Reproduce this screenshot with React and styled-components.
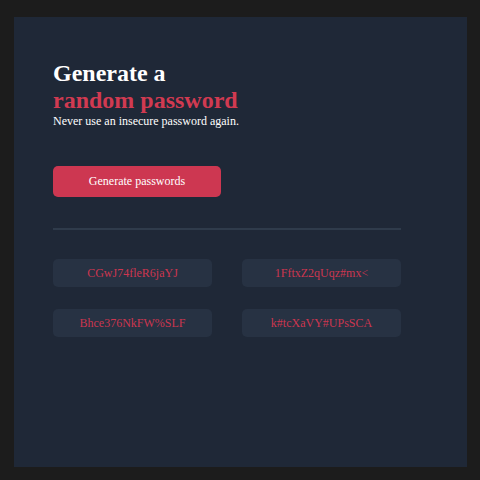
import React from "react";
import styled, { createGlobalStyle } from "styled-components";

const Global = createGlobalStyle`
  html, body { margin: 0; padding: 0; background: #1c1c1c; }
  body { font-family: "Liberation Serif", "Times New Roman", serif; }
  * { box-sizing: border-box; }
`;

const Page = styled.div`
  width: 480px;
  height: 480px;
  padding: 17px 13px 13px 14px;
`;

const Panel = styled.main`
  width: 453px;
  height: 450px;
  background: #1f2837;
  padding: 43px 39px 0 39px;
  display: flex;
  flex-direction: column;
`;

const Title = styled.h1`
  margin: 0;
  font-size: 24px;
  line-height: 27px;
  font-weight: 700;
  color: #ffffff;
`;

const Accent = styled.span`
  display: block;
  color: #d13a51;
`;

const Subtitle = styled.p`
  margin: 0;
  font-size: 12px;
  line-height: 15px;
  color: #ffffff;
`;

const Button = styled.button`
  margin-top: 37px;
  width: 168px;
  height: 31px;
  border: none;
  border-radius: 5px;
  background: #cd3751;
  color: #ffffff;
  font-family: inherit;
  font-size: 12px;
  cursor: pointer;
`;

const Divider = styled.hr`
  margin: 31px 0 0 0;
  width: 348px;
  border: none;
  height: 2px;
  background: #2f3b4b;
`;

const Grid = styled.div`
  margin-top: 29px;
  width: 348px;
  display: grid;
  grid-template-columns: 159px 159px;
  column-gap: 30px;
  row-gap: 22px;
`;

const PasswordBox = styled.div`
  height: 28px;
  border-radius: 5px;
  background: #273243;
  color: #cc3650;
  font-size: 12px;
  display: flex;
  align-items: center;
  justify-content: center;
`;

const passwords = ["CGwJ74fleR6jaYJ", "1FftxZ2qUqz#mx<", "Bhce376NkFW%SLF", "k#tcXaVY#UPsSCA"];

export default function App() {
  return (
    <>
      <Global />
      <Page>
        <Panel>
          <Title>
            Generate a
            <Accent>random password</Accent>
          </Title>
          <Subtitle>Never use an insecure password again.</Subtitle>
          <Button>Generate passwords</Button>
          <Divider />
          <Grid>
            {passwords.map((p) => (
              <PasswordBox key={p}>{p}</PasswordBox>
            ))}
          </Grid>
        </Panel>
      </Page>
    </>
  );
}
